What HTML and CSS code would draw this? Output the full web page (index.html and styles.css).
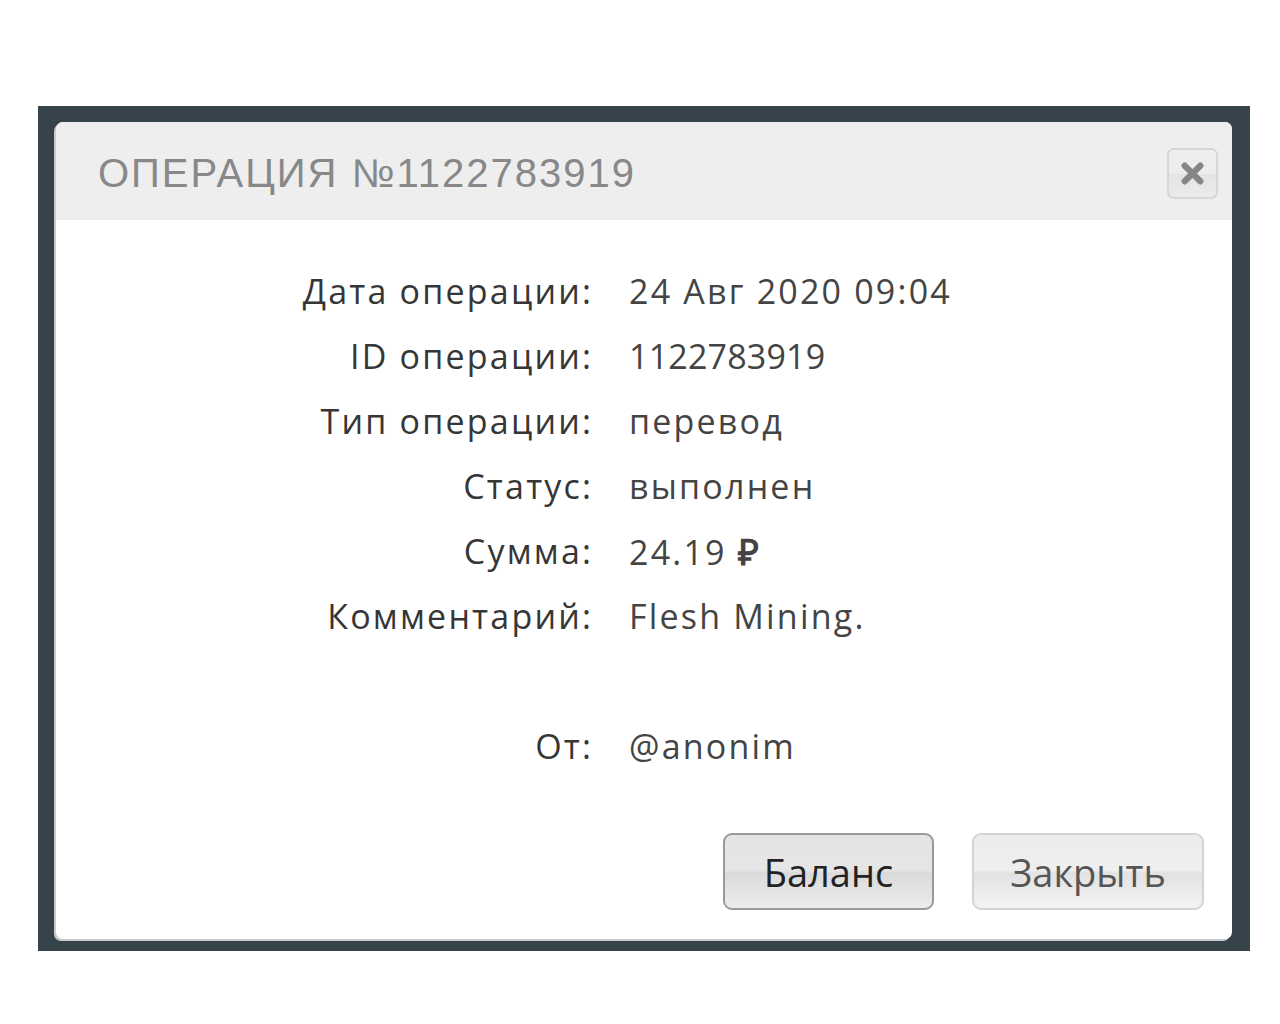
FILE: index.html
```html
<!DOCTYPE html>
<html lang="ru">
<head>
<meta charset="utf-8">
<title>Операция №1122783919</title>
<link rel="stylesheet" href="styles.css">
</head>
<body>
<div class="frame">
  <div class="modal">
    <div class="modal-header">
      <h1 class="modal-title">ОПЕРАЦИЯ №1122783919</h1>
      <button class="close-btn" aria-label="Закрыть">
        <svg width="25" height="25" viewBox="0 0 24 24"><path d="M4.5 4.5 L19.5 19.5 M19.5 4.5 L4.5 19.5" stroke="#868686" stroke-width="6" stroke-linecap="round"/></svg>
      </button>
    </div>
    <div class="modal-body">
      <div class="details">
        <div class="label">Дата операции:</div><div class="value">24 Авг 2020 09:04</div>
        <div class="label">ID операции:</div><div class="value"><span class="num">1122783919</span></div>
        <div class="label">Тип операции:</div><div class="value">перевод</div>
        <div class="label">Статус:</div><div class="value">выполнен</div>
        <div class="label">Сумма:</div><div class="value">24.19 <span class="rub">₽</span></div>
        <div class="label">Комментарий:</div><div class="value">Flesh Mining.</div>
        <div class="label"></div><div class="value"></div>
        <div class="label">От:</div><div class="value">@anonim</div>
      </div>
    </div>
    <div class="modal-footer">
      <button class="btn btn-primary">Баланс</button>
      <button class="btn btn-close">Закрыть</button>
    </div>
  </div>
</div>
</body>
</html>
```

FILE: styles.css
```css
html, body {
  margin: 0;
  padding: 0;
  background: #ffffff;
}

body {
  padding-top: 106px;
  padding-left: 38px;
  height: 1024px;
  box-sizing: border-box;
}

.frame {
  width: 1212px;
  height: 845px;
  background: #36434b;
  box-sizing: border-box;
  padding: 16px 18px 0 18px;
}

.modal {
  width: 1176px;
  height: 817px;
  background: #ffffff;
  border-radius: 7px;
  box-shadow: -2px 2px 0 #c9cccd;
  display: flex;
  flex-direction: column;
  overflow: hidden;
}

.modal-header {
  height: 98px;
  background: #eeeeee;
  display: flex;
  align-items: center;
  justify-content: space-between;
  padding: 0 14px 0 42px;
  flex-shrink: 0;
}

.modal-title {
  margin: 0;
  font-family: "Liberation Sans", sans-serif;
  font-weight: 400;
  font-size: 40px;
  letter-spacing: 2px;
  color: #888888;
  padding-top: 4px;
}

.close-btn {
  width: 51px;
  height: 51px;
  border: 2px solid #d6d6d6;
  border-radius: 7px;
  background: linear-gradient(#efefef 0%, #ececec 50%, #e3e3e3 51%, #ebebeb 100%);
  display: flex;
  align-items: center;
  justify-content: center;
  padding: 0;
  margin-top: 4px;
}

.modal-body {
  flex: 1;
  padding-top: 39px;
}

.details {
  display: grid;
  grid-template-columns: 535px 1fr;
  column-gap: 38px;
  grid-auto-rows: 65px;
  font-family: "Open Sans", sans-serif;
  font-size: 34px;
  line-height: 65px;
  letter-spacing: 2.2px;
}

.label {
  text-align: right;
  color: #363636;
  margin-right: -2.2px;
}

.value {
  color: #444444;
}

.num {
  letter-spacing: 0.2px;
}

.rub {
  font-weight: 700;
  font-size: 36px;
}

.modal-footer {
  display: flex;
  justify-content: flex-end;
  gap: 38px;
  padding: 0 28px 29px 0;
}

.btn {
  height: 77px;
  padding: 0;
  border: 2px solid #d3d3d3;
  border-radius: 9px;
  background: linear-gradient(#ececec 0%, #efefef 48%, #e2e2e2 52%, #f3f3f3 100%);
  font-family: "Open Sans", sans-serif;
  font-size: 38px;
  color: #555555;
}

.btn-primary {
  width: 211px;
  border-color: #9a9a9a;
  background: linear-gradient(#e4e4e4 0%, #e6e6e6 48%, #dadada 52%, #ededed 100%);
  color: #222222;
}

.btn-close {
  width: 232px;
}
```
